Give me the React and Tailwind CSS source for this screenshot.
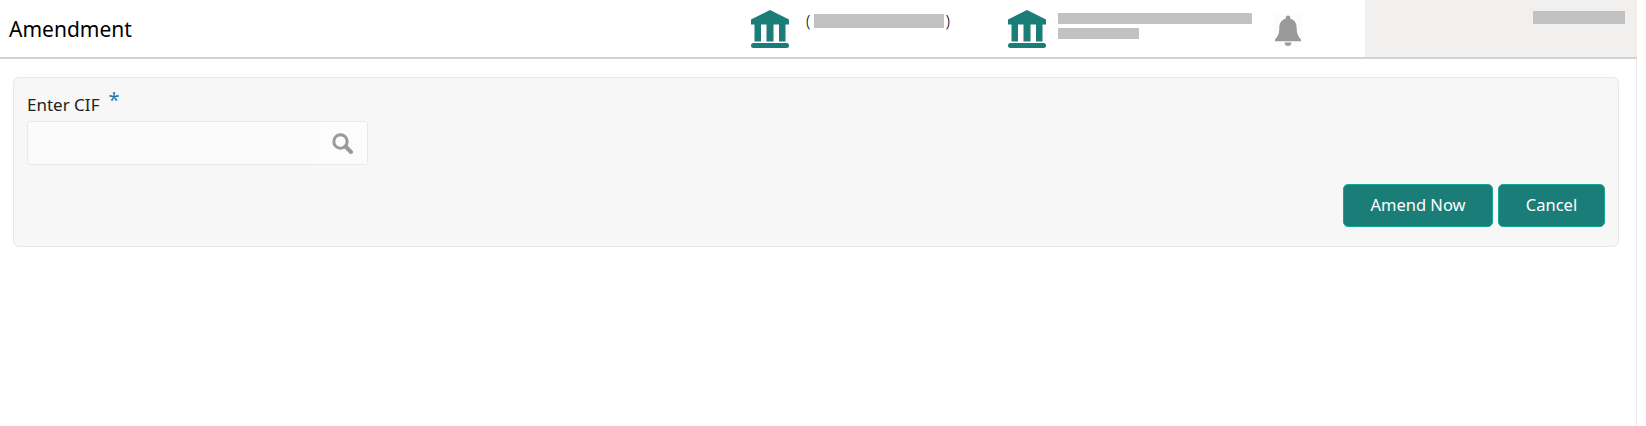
import React from "react";

const BankIcon = () => (
  <svg width="40" height="38" viewBox="0 0 40 38" className="shrink-0" fill="#1b7d78">
    <path d="M20 0 L39 9.5 V14.500 H1 V9.5 Z" />
    <rect x="4.500" y="14" width="6.500" height="17.500" />
    <rect x="16.500" y="14" width="7" height="17.500" />
    <rect x="29" y="14" width="6.500" height="17.500" />
    <rect x="1" y="33" width="38" height="5" rx="2.500" />
  </svg>
);

const BellIcon = () => (
  <svg width="28" height="31" viewBox="0 0 28 32" fill="#999999">
    <path d="M14 0.5 a2.4 2.4 0 0 1 2.4 2.4 v1 C21.5 5.2 23 9.5 23 14 c0 5.5 1.5 8 4.5 11.5 V27 H0.5 v-1.5 C3.5 22 5 19.500 5 14 C5 9.5 6.500 5.200 11.600 3.900 v-1 A2.400 2.400 0 0 1 14 0.500 Z" />
    <path d="M10.500 28.500 h7 a3.500 3.500 0 0 1 -7 0 Z" />
  </svg>
);

const SearchIcon = () => (
  <svg width="21" height="21" viewBox="0 0 21 21" fill="none" stroke="#999999">
    <circle cx="8.500" cy="8.500" r="6.700" strokeWidth="3" />
    <path d="M13.500 13.500 L19 19" strokeWidth="4" strokeLinecap="round" />
  </svg>
);

const Redacted = ({ className }) => <div className={`bg-[#c2c2c2] ${className}`} />;

const App = () => {
  return (
    <div className="min-h-[426px] w-[1637px] bg-white font-['Noto_Sans',sans-serif] text-black">
      <header className="flex h-[59px] items-stretch border-b-2 border-[#d2d2d2]">
        <h1 className="w-[750px] pl-[9px] pt-[14px] text-[21px] leading-[30px] font-normal">Amendment</h1>

        <div className="flex w-[257px] pt-[10px]">
          <BankIcon />
          <div className="ml-[16px] flex h-[22px] items-center text-[16px] leading-[22px] font-light">
            <span>(</span>
            <Redacted className="ml-[4px] mr-[1px] h-[14px] w-[130px]" />
            <span>)</span>
          </div>
        </div>

        <div className="flex w-[266px] pt-[10px]">
          <BankIcon />
          <div className="ml-[11px] pt-[3px]">
            <Redacted className="h-[11px] w-[194px]" />
            <Redacted className="mt-[4px] h-[11px] w-[81px]" />
          </div>
        </div>

        <div className="w-[92px] pt-[14px]">
          <div className="flex h-[33px] w-[30px] items-center justify-center bg-[#fcfcfc]">
            <BellIcon />
          </div>
        </div>

        <div className="flex flex-1 justify-end bg-[#f1f0ee] pr-[12px] pt-[11px]">
          <Redacted className="h-[13px] w-[92px]" />
        </div>
      </header>

      <main className="h-[367px] border-r border-[#ececec] pl-[13px] pr-[17px] pt-[18px]">
        <section className="h-[170px] rounded-[6px] border border-[#e8e8e8] bg-[#f7f7f7] pl-[13px] pr-[13px] pt-[14px]">
          <div className="flex h-[29px] items-start text-[17px] leading-[26px] text-[#222222]">
            <span>Enter CIF</span>
            <span className="ml-[9px] -mt-[2px] text-[20px] leading-[20px] text-[#2277aa]">*</span>
          </div>
          <div className="flex h-[44px] w-[341px] items-stretch justify-end rounded-[3px] border border-[#e9e9e9] bg-[#fbfbfb]">
            <div className="flex w-[51px] items-center justify-center bg-[#fcfcfc] pl-[2px]">
              <SearchIcon />
            </div>
          </div>
          <div className="mt-[19px] flex justify-end gap-[5px]">
            <button className="h-[43px] w-[150px] rounded-[5px] border border-[#14a894] bg-[#1b7d78] text-[16.5px] text-white">Amend Now</button>
            <button className="h-[43px] w-[107px] rounded-[5px] border border-[#14a894] bg-[#1b7d78] text-[16.5px] text-white">Cancel</button>
          </div>
        </section>
      </main>
    </div>
  );
};

export default App;
